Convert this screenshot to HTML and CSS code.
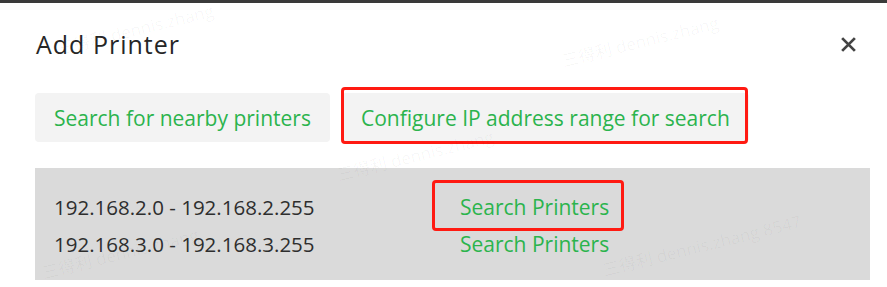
FILE: index.html
```html
<!DOCTYPE html>
<html lang="en">
  <head>
    <meta charset="utf-8" />
    <title>Add Printer</title>
    <link rel="stylesheet" href="styles.css">
  </head>
  <body>
    <div class="topbar"></div>

    <div class="dialog">
      <div class="dialog-header">
        <h2 class="dialog-title">Add Printer</h2>
        <button class="close-btn" aria-label="Close">
          <svg width="17" height="17" viewBox="0 0 16 16">
            <path d="M2 2 L14 14 M14 2 L2 14" stroke="#444" stroke-width="2.6" />
          </svg>
        </button>
      </div>

      <div class="tabs">
        <button class="tab">Search for nearby printers</button>
        <button class="tab tab-active">
          Configure IP address range for search
          <span class="mark mark-tab"></span>
        </button>
      </div>

      <div class="ranges">
        <div class="range-row">
          <span class="range-ip">192.168.2.0 - 192.168.2.255</span>
          <a class="range-link" href="#">Search Printers<span class="mark mark-link"></span></a>
        </div>
        <div class="range-row">
          <span class="range-ip">192.168.3.0 - 192.168.3.255</span>
          <a class="range-link" href="#">Search Printers</a>
        </div>
      </div>
    </div>

    <!-- watermark -->
    <div class="wm wm-1">三得利 dennis.zhang</div>
    <div class="wm wm-2">三得利 dennis.zhang</div>
    <div class="wm wm-3">三得利 dennis.zhang</div>
    <div class="wm wm-4">三得利 dennis.zhang</div>
    <div class="wm wm-5">三得利 dennis.zhang 8547</div>
  </body>
</html>
```

FILE: styles.css
```css
html {
  font-family: "Open Sans", "Noto Sans CJK SC", sans-serif;
}

body {
  margin: 0;
  width: 887px;
  height: 287px;
  overflow: hidden;
  background: #fff;
  position: relative;
}

.topbar {
  height: 3px;
  background-color: #3a3a3a;
}

.dialog {
  padding: 0 17px 0 35px;
}

.dialog-header {
  display: flex;
  justify-content: space-between;
  align-items: center;
  margin-top: 24px;
  height: 34px;
}

.dialog-title {
  margin: 0 0 0 1px;
  font-size: 25px;
  font-weight: 400;
  letter-spacing: 1px;
  color: #262626;
}

.close-btn {
  border: none;
  background: none;
  padding: 0;
  margin-right: 13px;
  width: 17px;
  height: 17px;
}

.tabs {
  display: flex;
  gap: 12px;
  margin-top: 32px;
}

.tab {
  position: relative;
  height: 49px;
  padding: 0 19px;
  border: none;
  border-radius: 4px;
  background-color: #f3f3f3;
  color: #2bb44d;
  font-family: inherit;
  font-size: 21px;
}

.ranges {
  margin-top: 26px;
  padding: 21px 19px 17px;
  background-color: #dadada;
}

.range-row {
  display: grid;
  grid-template-columns: 406px auto;
  line-height: 37px;
}

.range-ip {
  font-size: 20.5px;
  color: #2e2e2e;
}

.range-link {
  position: relative;
  justify-self: start;
  font-size: 21px;
  color: #2bb44d;
  text-decoration: none;
}

/* red annotation boxes */
.mark {
  position: absolute;
  border: 3px solid #ff1a12;
  border-radius: 4px;
  pointer-events: none;
}

.mark-tab {
  top: -6px;
  left: -1px;
  right: 1px;
  bottom: -2px;
}

.mark-link {
  top: -9px;
  left: -28px;
  right: -15px;
  bottom: -5px;
}

.wm {
  position: absolute;
  font-size: 17px;
  line-height: 20px;
  color: rgba(0, 0, 0, 0.035);
  white-space: nowrap;
  transform: rotate(-14deg);
  pointer-events: none;
}

.wm-1 { left: 55px; top: 20px; }
.wm-2 { left: 560px; top: 32px; }
.wm-3 { left: 335px; top: 146px; }
.wm-4 { left: 40px; top: 244px; }
.wm-5 { left: 600px; top: 236px; }
```
